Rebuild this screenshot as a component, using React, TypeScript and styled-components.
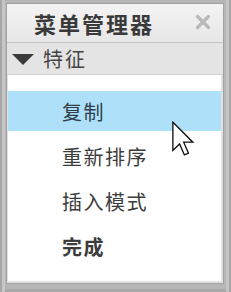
import React from "react";
import styled, { createGlobalStyle } from "styled-components";

const GlobalStyle = createGlobalStyle`
  html, body {
    margin: 0;
    padding: 0;
    background: #a8a8a8;
  }
  body {
    font-family: "Noto Sans CJK SC", "Noto Sans", sans-serif;
  }
`;

const Frame = styled.div`
  width: 231px;
  height: 292px;
  box-sizing: border-box;
  padding: 4px 8px 9px 7px;
  background: #b6b6b6;
  box-shadow: inset 2px 0 0 #a6a6a6, inset 5px 0 0 #c6c6c6,
    inset -2px 0 0 #a6a6a6, inset -5px 0 0 #c4c4c4,
    inset 0 -3px 0 #a8a8a8;
`;

const Panel = styled.div`
  height: 100%;
  display: flex;
  flex-direction: column;
  background: #e1e1e1;
  box-shadow: 0 0 0 1px #a2a2a2;
`;

const TitleBar = styled.div`
  height: 38px;
  flex: none;
  display: flex;
  align-items: center;
  justify-content: space-between;
  padding: 0 12px 0 27px;
  background: linear-gradient(#f3f3f3, #e7e7e7);
  border-bottom: 1px solid #c6c6c6;
`;

const Title = styled.span`
  font-size: 22px;
  font-weight: 700;
  letter-spacing: 2px;
  color: #3a3a3a;
  line-height: 1;
`;

const CloseIcon = styled.svg`
  width: 16px;
  height: 16px;
  margin-bottom: 2px;
`;

const SectionBar = styled.div`
  height: 31px;
  flex: none;
  display: flex;
  align-items: center;
  gap: 9px;
  padding-left: 5px;
  background: #e4e4e4;
  border-bottom: 1px solid #d2d2d2;
`;

const Triangle = styled.span`
  width: 0;
  height: 0;
  border-left: 11px solid transparent;
  border-right: 11px solid transparent;
  border-top: 11px solid #3a3a3a;
  margin-top: 2px;
`;

const SectionLabel = styled.span`
  font-size: 20px;
  letter-spacing: 2px;
  color: #444;
  line-height: 1;
`;

const List = styled.div`
  flex: 1;
  margin: 0 2px 2px 1px;
  padding-top: 16px;
  background: #fff;
  display: flex;
  flex-direction: column;
  gap: 5px;
  position: relative;
`;

const Row = styled.div<{ $active?: boolean; $bold?: boolean }>`
  height: 40px;
  display: flex;
  align-items: center;
  padding-left: 54px;
  font-size: 20px;
  letter-spacing: 1.5px;
  color: ${(p) => (p.$active ? "#2e3e4a" : "#3c3c3c")};
  font-weight: ${(p) => (p.$bold ? 700 : 400)};
  background: ${(p) => (p.$active ? "#aee0f9" : "transparent")};
`;

const Cursor = styled.svg`
  position: absolute;
  left: 164px;
  top: 46px;
  width: 23px;
  height: 36px;
`;

export default function App() {
  return (
    <>
      <GlobalStyle />
      <Frame>
        <Panel>
          <TitleBar>
            <Title>菜单管理器</Title>
            <CloseIcon viewBox="0 0 16 16">
              <path d="M2.5 2.5 L13.5 13.5 M13.5 2.5 L2.5 13.5" stroke="#b9b9b9" strokeWidth="3.2" strokeLinecap="round" />
            </CloseIcon>
          </TitleBar>
          <SectionBar>
            <Triangle />
            <SectionLabel>特征</SectionLabel>
          </SectionBar>
          <List>
            <Row $active>复制</Row>
            <Row>重新排序</Row>
            <Row>插入模式</Row>
            <Row $bold>完成</Row>
            <Cursor viewBox="0 0 13 20">
              <path
                d="M0.5 0.5 L0.5 16.5 L4.3 12.8 L7 19 L9.3 18 L6.6 11.8 L11.8 11.8 Z"
                fill="#fff"
                stroke="#111"
                strokeWidth="0.75"
                strokeLinejoin="miter"
              />
            </Cursor>
          </List>
        </Panel>
      </Frame>
    </>
  );
}
